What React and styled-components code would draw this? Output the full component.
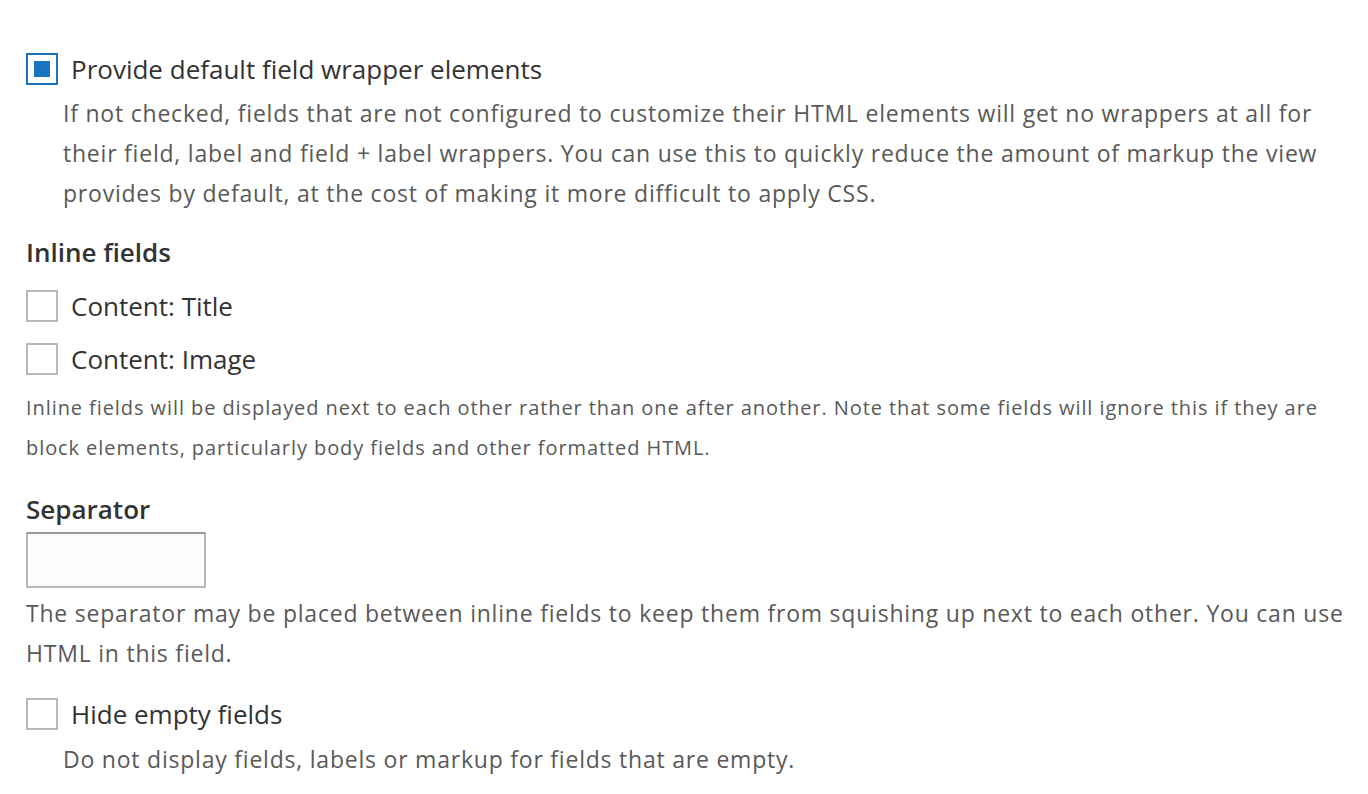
import React, { useState } from "react";
import styled, { createGlobalStyle } from "styled-components";

const GlobalStyle = createGlobalStyle`
  html, body { margin: 0; padding: 0; background: #fff; }
  body { font-family: "Open Sans", "Noto Sans", sans-serif; color: #333; }
`;

const Form = styled.div`
  padding: 51px 16px 20px 26px;
  display: flex;
  flex-direction: column;
`;

const Item = styled.div`
  display: flex;
  flex-direction: column;
  margin-top: ${(p) => p.$gap || 0}px;
`;

const CheckRow = styled.label`
  display: flex;
  align-items: center;
  gap: 13px;
  height: 36px;
  font-size: 26px;
  line-height: 36px;
  color: #333;
  cursor: pointer;
`;

const Box = styled.span`
  width: 32px;
  height: 32px;
  box-sizing: border-box;
  border: 2px solid ${(p) => (p.$checked ? "#1a73be" : "#b8b8b8")};
  background: #fff;
  display: flex;
  align-items: center;
  justify-content: center;
  flex: none;
  &::after {
    content: "";
    width: 16px;
    height: 16px;
    background: ${(p) => (p.$checked ? "#1a73be" : "transparent")};
  }
`;

const Description = styled.div`
  margin-top: ${(p) => p.$gap || 0}px;
  padding-left: ${(p) => (p.$indent ? 37 : 0)}px;
  font-size: ${(p) => (p.$small ? 20 : 23)}px;
  letter-spacing: ${(p) => (p.$small ? 0.92 : 0.78)}px;
  line-height: 40px;
  color: #595959;
`;

const Heading = styled.div`
  font-size: 26px;
  font-weight: 600;
  line-height: 36px;
  color: #333;
`;

const TextInput = styled.input`
  margin-top: 5px;
  width: 180px;
  height: 56px;
  box-sizing: border-box;
  border: 2px solid #b8b8b8;
  border-top-color: #999;
  background: #fcfcfa;
  font-family: inherit;
  font-size: 22px;
  padding: 0 10px;
  outline: none;
`;

function Checkbox({ label, checked, onChange }) {
  return (
    <CheckRow onClick={onChange}>
      <Box $checked={checked} />
      {label}
    </CheckRow>
  );
}

export default function App() {
  const [vals, setVals] = useState({ wrap: true, title: false, image: false, hide: false });
  const toggle = (k) => () => setVals((v) => ({ ...v, [k]: !v[k] }));

  return (
    <>
      <GlobalStyle />
      <Form>
        <Item>
          <Checkbox label="Provide default field wrapper elements" checked={vals.wrap} onChange={toggle("wrap")} />
          <Description $indent $gap={6}>
            If not checked, fields that are not configured to customize their HTML elements will get no wrappers at all for
            their field, label and field + label wrappers. You can use this to quickly reduce the amount of markup the view
            provides by default, at the cost of making it more difficult to apply CSS.
          </Description>
        </Item>

        <Item $gap={21}>
          <Heading>Inline fields</Heading>
          <Item $gap={18}>
            <Checkbox label="Content: Title" checked={vals.title} onChange={toggle("title")} />
          </Item>
          <Item $gap={17}>
            <Checkbox label="Content: Image" checked={vals.image} onChange={toggle("image")} />
          </Item>
          <Description $small $gap={11}>
            Inline fields will be displayed next to each other rather than one after another. Note that some fields will ignore this if they are
            block elements, particularly body fields and other formatted HTML.
          </Description>
        </Item>

        <Item $gap={23}>
          <Heading>Separator</Heading>
          <TextInput type="text" />
          <Description $gap={5}>
            The separator may be placed between inline fields to keep them from squishing up next to each other. You can use
            HTML in this field.
          </Description>
        </Item>

        <Item $gap={23}>
          <Checkbox label="Hide empty fields" checked={vals.hide} onChange={toggle("hide")} />
          <Description $indent $gap={7}>
            Do not display fields, labels or markup for fields that are empty.
          </Description>
        </Item>
      </Form>
    </>
  );
}
